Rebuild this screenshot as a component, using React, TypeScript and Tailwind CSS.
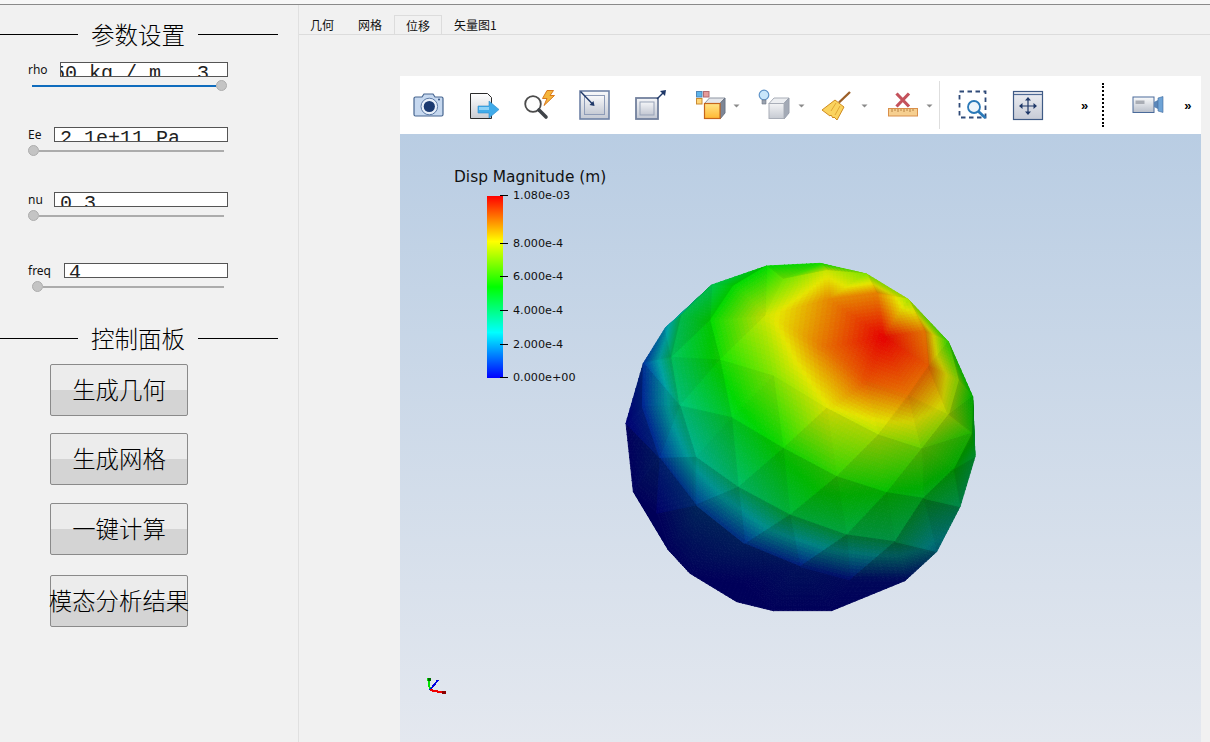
// ParaView style solver window: parameter panel on the left, viewer on the right

type P = { x: number; y: number; s: number };

// mesh vertices read off the picture, s = position on the colour bar
const verts: P[] = [
  // rim
  { x: 470, y: 48, s: 0.5 }, { x: 630, y: 40, s: 0.52 }, { x: 770, y: 72, s: 0.64 }, { x: 895, y: 148, s: 0.68 },
  { x: 1015, y: 275, s: 0.56 }, { x: 1088, y: 440, s: 0.5 }, { x: 1095, y: 620, s: 0.42 }, { x: 1050, y: 770, s: 0.36 },
  { x: 980, y: 905, s: 0.2 }, { x: 885, y: 992, s: 0.02 }, { x: 665, y: 1082, s: 0 }, { x: 490, y: 1082, s: 0 },
  { x: 380, y: 1055, s: 0 }, { x: 240, y: 970, s: 0 }, { x: 175, y: 900, s: 0 }, { x: 70, y: 725, s: 0 },
  { x: 48, y: 520, s: 0 }, { x: 100, y: 340, s: 0.08 }, { x: 165, y: 235, s: 0.2 }, { x: 305, y: 105, s: 0.4 },
  // inside
  { x: 520, y: 88, s: 0.62 }, { x: 650, y: 62, s: 0.72 }, { x: 800, y: 130, s: 0.86 }, { x: 655, y: 148, s: 0.85 },
  { x: 465, y: 198, s: 0.72 }, { x: 370, y: 108, s: 0.5 }, { x: 300, y: 212, s: 0.5 }, { x: 215, y: 195, s: 0.4 },
  { x: 185, y: 322, s: 0.38 }, { x: 330, y: 330, s: 0.52 }, { x: 490, y: 378, s: 0.64 }, { x: 635, y: 290, s: 0.87 },
  { x: 820, y: 262, s: 1 }, { x: 945, y: 245, s: 0.87 }, { x: 955, y: 350, s: 0.9 }, { x: 765, y: 392, s: 0.91 },
  { x: 895, y: 437, s: 0.87 }, { x: 1045, y: 390, s: 0.66 }, { x: 650, y: 475, s: 0.74 }, { x: 805, y: 555, s: 0.69 },
  { x: 1015, y: 495, s: 0.7 }, { x: 1085, y: 550, s: 0.54 }, { x: 935, y: 597, s: 0.62 }, { x: 1030, y: 658, s: 0.5 },
  { x: 520, y: 595, s: 0.52 }, { x: 680, y: 680, s: 0.55 }, { x: 830, y: 728, s: 0.5 }, { x: 940, y: 745, s: 0.46 },
  { x: 365, y: 503, s: 0.46 }, { x: 210, y: 468, s: 0.34 }, { x: 97, y: 470, s: 0.06 }, { x: 150, y: 625, s: 0.07 },
  { x: 258, y: 622, s: 0.3 }, { x: 385, y: 712, s: 0.36 }, { x: 540, y: 795, s: 0.42 }, { x: 710, y: 855, s: 0.4 },
  { x: 855, y: 875, s: 0.38 }, { x: 258, y: 765, s: 0.1 }, { x: 405, y: 882, s: 0.08 }, { x: 570, y: 950, s: 0.05 },
  { x: 140, y: 790, s: 0 }, { x: 400, y: 1000, s: 0 }, { x: 720, y: 990, s: 0.02 },
];

function delaunay(pts: P[]): number[][] {
  const all = [...pts, { x: -5000, y: -5000, s: 0 }, { x: 7000, y: -5000, s: 0 }, { x: 500, y: 8000, s: 0 }];
  const n = pts.length;
  let tris: number[][] = [[n, n + 1, n + 2]];
  const inCircle = (t: number[], p: P) => {
    const [a, b, c] = t.map((i) => all[i]);
    const ax = a.x - p.x, ay = a.y - p.y, bx = b.x - p.x, by = b.y - p.y, cx = c.x - p.x, cy = c.y - p.y;
    const det =
      (ax * ax + ay * ay) * (bx * cy - cx * by) -
      (bx * bx + by * by) * (ax * cy - cx * ay) +
      (cx * cx + cy * cy) * (ax * by - bx * ay);
    const area = (b.x - a.x) * (c.y - a.y) - (c.x - a.x) * (b.y - a.y);
    return area > 0 ? det > 0 : det < 0;
  };
  pts.forEach((p, i) => {
    const bad = tris.filter((t) => inCircle(t, p));
    const edges: number[][] = [];
    bad.forEach((t) => {
      [[t[0], t[1]], [t[1], t[2]], [t[2], t[0]]].forEach(([u, v]) => {
        const shared = bad.some((o) => o !== t && o.includes(u) && o.includes(v));
        if (!shared) edges.push([u, v]);
      });
    });
    tris = tris.filter((t) => !bad.includes(t));
    edges.forEach(([u, v]) => tris.push([u, v, i]));
  });
  return tris.filter((t) => t.every((i) => i < n));
}

function jet(s: number): number[] {
  const stops = [[0, 0, 255], [0, 255, 255], [0, 255, 0], [255, 255, 0], [255, 0, 0]];
  const f = Math.min(Math.max(s, 0), 0.9999) * 4;
  const i = Math.floor(f);
  const t = f - i;
  return stops[i].map((c, k) => c + (stops[i + 1][k] - c) * t);
}

function buildFacets() {
  const out: { pts: string; fill: string }[] = [];
  const div = 12;
  delaunay(verts).forEach((tri) => {
    const [a, b, c] = tri.map((i) => verts[i]);
    const nx = ((a.x + b.x + c.x) / 3 - 570) / 525;
    const ny = ((a.y + b.y + c.y) / 3 - 560) / 525;
    const nz = Math.sqrt(Math.max(0, 1 - nx * nx - ny * ny));
    const dot = 0.18 * nx - 0.6 * ny + 0.78 * nz;
    const shade = Math.min(0.9, Math.max(0.35, 0.32 + 0.65 * dot));
    const at = (i: number, j: number) => {
      const u = i / div, v = j / div, w = 1 - u - v;
      return { x: a.x * w + b.x * u + c.x * v, y: a.y * w + b.y * u + c.y * v, s: a.s * w + b.s * u + c.s * v };
    };
    const push = (p: P, q: P, r: P) => {
      const col = jet((p.s + q.s + r.s) / 3).map((v) => Math.round(v * shade));
      out.push({
        pts: `${p.x.toFixed(1)},${p.y.toFixed(1)} ${q.x.toFixed(1)},${q.y.toFixed(1)} ${r.x.toFixed(1)},${r.y.toFixed(1)}`,
        fill: `rgb(${col.join(",")})`,
      });
    };
    for (let i = 0; i < div; i++) {
      for (let j = 0; j < div - i; j++) {
        push(at(i, j), at(i + 1, j), at(i, j + 1));
        if (i + j < div - 1) push(at(i + 1, j), at(i + 1, j + 1), at(i, j + 1));
      }
    }
  });
  return out;
}

const facets = buildFacets();

function Sphere() {
  return (
    <svg className="absolute left-[210px] top-[116px] w-[380px] h-[370px]" viewBox="0 0 1140 1110">
      {facets.map((f, i) => (
        <polygon key={i} points={f.pts} fill={f.fill} stroke={f.fill} strokeWidth="2.5" />
      ))}
    </svg>
  );
}

function Caret() {
  return (
    <svg className="w-[7px] h-[4px] mt-[2px]" viewBox="0 0 7 4">
      <path d="M0.5 0.5h6L3.5 3.5z" fill="#8a8a8a" />
    </svg>
  );
}

function IconCamera() {
  return (
    <svg className="w-[32px] h-[32px]" viewBox="0 0 32 32">
      <path d="M2.5 8h6.5l2-3h9l2 3h6.500a1.500 1.500 0 0 1 1.500 1.500v16a1.500 1.500 0 0 1-1.500 1.500h-26a1.500 1.500 0 0 1-1.500-1.500v-16a1.500 1.500 0 0 1 1.500-1.500z" fill="#c6d8ef" stroke="#46658f" strokeWidth="1.200" />
      <circle cx="16.300" cy="17.500" r="8.300" fill="#e9f0fa" stroke="#5c7aa5" />
      <circle cx="16.300" cy="17.500" r="5.600" fill="#1b3a70" />
      <circle cx="26" cy="10.500" r="1" fill="#2e4c7e" />
    </svg>
  );
}

function IconExport() {
  return (
    <svg className="w-[32px] h-[32px]" viewBox="0 0 32 32">
      <defs>
        <linearGradient id="pg" x1="0" y1="0" x2="0" y2="1">
          <stop offset="0" stopColor="#ffffff" />
          <stop offset="1" stopColor="#c9ccd2" />
        </linearGradient>
      </defs>
      <path d="M1.500 4.500h17l4 4v21h-21z" fill="url(#pg)" stroke="#2b2b2b" />
      <path d="M9 17h11v-5l10 8.500-10 8.500v-5h-11z" fill="#41abe9" stroke="#2a8ccc" strokeWidth="0.600" />
      <path d="M10 18h10v3h-10z" fill="#8ed2f7" />
    </svg>
  );
}

function IconZoomBolt() {
  return (
    <svg className="w-[32px] h-[32px]" viewBox="0 0 32 32">
      <path d="M24 1.500h6.500l-3.500 5h4.500l-10.500 10 3-7h-4.500z" fill="#f5b63c" stroke="#d9791c" />
      <circle cx="10" cy="15" r="7.800" fill="#fdfdfd" stroke="#4b4b4b" strokeWidth="1.800" />
      <path d="M16 21l7 7" stroke="#3f4348" strokeWidth="3.600" strokeLinecap="round" />
    </svg>
  );
}

function IconReset() {
  return (
    <svg className="w-[32px] h-[32px]" viewBox="0 0 32 32">
      <defs>
        <linearGradient id="fg" x1="0" y1="0" x2="0" y2="1">
          <stop offset="0" stopColor="#f8f9fb" />
          <stop offset="1" stopColor="#c5cad4" />
        </linearGradient>
      </defs>
      <rect x="1" y="2" width="29" height="28" fill="url(#fg)" stroke="#6f82a6" strokeWidth="1.600" />
      <rect x="5.500" y="6.500" width="20" height="19" fill="url(#fg)" stroke="#8e9cb8" />
      <path d="M1.500 2.500L14 15.500" stroke="#1f3868" strokeWidth="1.400" />
      <path d="M15.500 17l-1-5-4 4z" fill="#1f3868" />
    </svg>
  );
}

function IconZoomOut() {
  return (
    <svg className="w-[32px] h-[32px]" viewBox="0 0 32 32">
      <defs>
        <linearGradient id="fo" x1="0" y1="0" x2="0" y2="1">
          <stop offset="0" stopColor="#f4f5f8" />
          <stop offset="1" stopColor="#c2c7d2" />
        </linearGradient>
      </defs>
      <rect x="1" y="9" width="22" height="21" fill="url(#fo)" stroke="#72809d" strokeWidth="1.800" />
      <rect x="5" y="13" width="14" height="13" fill="url(#fo)" stroke="#98a3b8" />
      <path d="M22 10L29 3" stroke="#1f3868" strokeWidth="1.400" />
      <path d="M31 1l-6 1 5 5z" fill="#1f3868" />
    </svg>
  );
}

function IconColorCube() {
  return (
    <svg className="w-[32px] h-[32px]" viewBox="0 0 32 32">
      <defs>
        <linearGradient id="oc" x1="0" y1="0" x2="0" y2="1">
          <stop offset="0" stopColor="#ffe487" />
          <stop offset="1" stopColor="#ffb832" />
        </linearGradient>
      </defs>
      <rect x="2.500" y="2.500" width="5.500" height="5.500" fill="#5db4ea" stroke="#4f86b8" />
      <rect x="9.500" y="2.500" width="5.500" height="5.500" fill="#e59a9a" stroke="#b06a72" />
      <rect x="2.500" y="9.500" width="5.500" height="5.500" fill="#ffd577" stroke="#c98a32" />
      <path d="M10.500 14.500l5-5.500h15.500l-5 5.500z" fill="#e4e6ea" stroke="#8f96a3" />
      <path d="M26 14.500l5-5.500v15l-5 6z" fill="#7d8696" stroke="#6b7484" />
      <rect x="10.500" y="14.500" width="15.500" height="15" fill="url(#oc)" stroke="#c5651c" strokeWidth="1.200" />
    </svg>
  );
}

function IconLightCube() {
  return (
    <svg className="w-[32px] h-[32px]" viewBox="0 0 32 32">
      <defs>
        <linearGradient id="gc" x1="0" y1="0" x2="0" y2="1">
          <stop offset="0" stopColor="#f2f3f5" />
          <stop offset="1" stopColor="#c6cad2" />
        </linearGradient>
      </defs>
      <path d="M11 14.500l5-5.500h15l-5 5.500z" fill="#eceef1" stroke="#a9aeb8" />
      <path d="M26 14.500l5-5.500v15l-5 6z" fill="#a3aab6" stroke="#989fac" />
      <rect x="11" y="14.500" width="15" height="15" fill="url(#gc)" stroke="#a9aeb8" />
      <circle cx="6" cy="6" r="4.800" fill="#c8e6fb" stroke="#5f93c8" strokeWidth="1.200" />
      <path d="M4 11h4v4h-4z" fill="#9aa3b0" stroke="#6f7785" strokeWidth="0.600" />
    </svg>
  );
}

function IconBroom() {
  return (
    <svg className="w-[30px] h-[32px]" viewBox="0 0 30 32">
      <path d="M28 3L17 13.500" stroke="#9c5f28" strokeWidth="2.400" />
      <path d="M13 11l9 7-7 13-3-3-1 1-2-3-1 1-8-6z" fill="#fbd35e" stroke="#cf8b20" />
      <path d="M14 14l-5 8M18 17l-5 9" stroke="#d99b2a" strokeWidth="0.800" />
    </svg>
  );
}

function IconRuler() {
  return (
    <svg className="w-[32px] h-[32px]" viewBox="0 0 32 32">
      <path d="M10.500 4.500L23 17.500M23 4.500L10.500 17.500" stroke="#c4525c" strokeWidth="3.200" />
      <rect x="2.500" y="19.500" width="29" height="7.500" fill="#f6cf90" stroke="#d98f4a" />
      <path d="M6 20v3M9 20v2M12 20v3M15 20v2M18 20v3M21 20v2M24 20v3M27 20v2" stroke="#a8702e" strokeWidth="0.800" />
    </svg>
  );
}

function IconZoomBox() {
  return (
    <svg className="w-[32px] h-[32px]" viewBox="0 0 32 32">
      <rect x="2.500" y="2.500" width="26" height="26" fill="none" stroke="#2f4a78" strokeWidth="1.800" strokeDasharray="4.500 3.500" />
      <circle cx="17" cy="18" r="6" fill="#eef5fb" stroke="#2a79b8" strokeWidth="1.800" />
      <path d="M21.500 22.500l7 6.500" stroke="#2a79b8" strokeWidth="2.800" />
    </svg>
  );
}

function IconWindow() {
  return (
    <svg className="w-[32px] h-[32px]" viewBox="0 0 32 32">
      <defs>
        <linearGradient id="wg" x1="0" y1="0" x2="0" y2="1">
          <stop offset="0" stopColor="#eceef3" />
          <stop offset="1" stopColor="#c7cbd6" />
        </linearGradient>
      </defs>
      <rect x="1.500" y="2.500" width="29" height="28" fill="url(#wg)" stroke="#3f5a85" strokeWidth="1.200" />
      <path d="M2 5.500h28" stroke="#4f6a95" strokeWidth="1.200" />
      <path d="M16 10v14M9 17h14" stroke="#1f3868" strokeWidth="1.200" />
      <path d="M16 8l-3 3.500h6zM16 26l-3-3.500h6zM7 17l3.500-3v6zM25 17l-3.500-3v6z" fill="#1f3868" />
    </svg>
  );
}

function IconVideo() {
  return (
    <svg className="w-[32px] h-[18px]" viewBox="0 0 32 18">
      <defs>
        <linearGradient id="vg" x1="0" y1="0" x2="0" y2="1">
          <stop offset="0" stopColor="#fafbfc" />
          <stop offset="1" stopColor="#b9bfca" />
        </linearGradient>
      </defs>
      <rect x="1" y="1" width="21" height="15.500" fill="url(#vg)" stroke="#4a6a9a" />
      <rect x="3.500" y="4.500" width="9" height="3.500" fill="#a9adb5" />
      <path d="M22 6l4-2v9l-4-2z" fill="#5b86b8" />
      <path d="M26 2l5-1.500v16l-5-1.500z" fill="#6ea3d6" stroke="#3f6a9c" strokeWidth="0.600" />
    </svg>
  );
}

const params = [
  { name: "rho", value: "50 kg / m   3", rowTop: "mt-[16px]", labelW: "w-[32px]", boxW: "w-[168px]", text: "-ml-[8px]", pt: "pt-[4px]", at: 100 },
  { name: "Ee", value: "2.1e+11 Pa", rowTop: "mt-[36px]", labelW: "w-[26px]", boxW: "w-[174px]", text: "ml-[5px]", pt: "pt-[4px]", at: 0 },
  { name: "nu", value: "0.3", rowTop: "mt-[36px]", labelW: "w-[26px]", boxW: "w-[174px]", text: "ml-[5px]", pt: "pt-[4px]", at: 0 },
  { name: "freq", value: "4", rowTop: "mt-[42px]", labelW: "w-[36px]", boxW: "w-[164px]", text: "ml-[4px]", pt: "pt-[2px]", at: 4 },
];

const buttons = [
  { label: "生成几何", top: "mt-[14px]" },
  { label: "生成网格", top: "mt-[17px]" },
  { label: "一键计算", top: "mt-[18px]" },
  { label: "模态分析结果", top: "mt-[20px]" },
];

const ticks = [
  { y: 61, t: "1.080e-03" },
  { y: 109, t: "8.000e-4" },
  { y: 142, t: "6.000e-4" },
  { y: 176, t: "4.000e-4" },
  { y: 210, t: "2.000e-4" },
  { y: 243, t: "0.000e+00" },
];

function SectionTitle({ text, top }: { text: string; top: string }) {
  return (
    <div className={`flex items-center h-[24px] w-[278px] ${top}`}>
      <div className="w-[78px] h-px bg-black" />
      <div className="w-[120px] text-center text-[23.500px] leading-[24px] font-light text-black">{text}</div>
      <div className="w-[80px] h-px bg-black" />
    </div>
  );
}

function ParamRow({ p }: { p: (typeof params)[number] }) {
  return (
    <>
      <div className={`flex items-center pl-[28px] ${p.rowTop}`}>
        <div className={`${p.labelW} text-[12px] leading-[15px] text-[#111] font-['Noto_Sans',sans-serif]`}>{p.name}</div>
        <div className={`${p.boxW} h-[15px] box-border border border-[#555] bg-white overflow-hidden ${p.pt}`}>
          <div className={`${p.text} whitespace-pre text-[20px] leading-[13px] text-[#222] font-['Liberation_Mono',monospace]`}>{p.value}</div>
        </div>
      </div>
      {p.at === 100 ? (
        <div className="flex items-center mt-[3px] h-[11px] pl-[32px]">
          <div className="w-[184px] h-[2px] bg-[#0f6cbd]" />
          <div className="w-[11px] h-[11px] rounded-full bg-[#c4c4c4] border border-[#adadad]" />
        </div>
      ) : (
        <div className={`flex items-center mt-[3px] h-[11px] ${p.at === 4 ? "pl-[32px]" : "pl-[28px]"}`}>
          <div className="w-[11px] h-[11px] rounded-full bg-[#c4c4c4] border border-[#adadad] shrink-0" />
          <div className={`${p.at === 4 ? "w-[181px]" : "w-[185px]"} h-[2px] bg-[#acacac]`} />
        </div>
      )}
    </>
  );
}

export default function App() {
  return (
    <div className="w-[1210px] h-[742px] overflow-hidden flex flex-col bg-[#f1f1f1] font-['Noto_Sans_CJK_SC',sans-serif]">
      <div className="h-[4px] bg-[#f7f7f7]" />
      <div className="h-px bg-[#8a8a8a]" />

      <div className="flex-1 flex min-h-0">
        {/* left panel */}
        <div className="w-[299px] shrink-0 flex flex-col pt-[17px]">
          <SectionTitle text="参数设置" top="" />
          {params.map((p) => (
            <ParamRow key={p.name} p={p} />
          ))}
          <SectionTitle text="控制面板" top="mt-[34px]" />
          {buttons.map((b) => (
            <div
              key={b.label}
              className={`ml-[50px] w-[138px] h-[52px] box-border border border-[#8a8a8a] rounded-[2px] flex items-center justify-center whitespace-nowrap text-[23.400px] font-light text-black bg-[linear-gradient(#ececec_0,#ececec_50%,#d4d4d4_50%,#d4d4d4_100%)] ${b.top}`}
            >
              {b.label}
            </div>
          ))}
        </div>

        {/* right side */}
        <div className="flex-1 flex flex-col min-w-0 border-l border-[#e0e0e0] -ml-px">
          <div className="h-[30px] pt-[10px] shrink-0 flex border-b border-[#dcdcdc] text-[12px] leading-[20px] text-[#111]">
            <div className="pl-[11px] pr-[12px]">几何</div>
            <div className="px-[12px]">网格</div>
            <div className="px-[11px] border border-b-0 border-[#dcdcdc] bg-[#f1f1f1]">位移</div>
            <div className="px-[12px]">矢量图1</div>
          </div>

          <div className="flex-1 flex flex-col ml-[101px] mt-[41px] w-[801px] min-h-0">
            {/* toolbar */}
            <div className="h-[58px] shrink-0 bg-white flex items-center">
              <div className="ml-[13px]"><IconCamera /></div>
              <div className="ml-[24px]"><IconExport /></div>
              <div className="ml-[22px]"><IconZoomBolt /></div>
              <div className="ml-[24px]"><IconReset /></div>
              <div className="ml-[24px]"><IconZoomOut /></div>
              <div className="ml-[27px]"><IconColorCube /></div>
              <div className="ml-[7px]"><Caret /></div>
              <div className="ml-[18px]"><IconLightCube /></div>
              <div className="ml-[8px]"><Caret /></div>
              <div className="ml-[17px]"><IconBroom /></div>
              <div className="ml-[9px]"><Caret /></div>
              <div className="ml-[18px]"><IconRuler /></div>
              <div className="ml-[8px]"><Caret /></div>
              <div className="ml-[6px] w-px h-[48px] bg-[#dedede]" />
              <div className="ml-[17px]"><IconZoomBox /></div>
              <div className="ml-[23px]"><IconWindow /></div>
              <div className="ml-[37px] text-[13px] leading-none font-bold text-black font-['Liberation_Sans',sans-serif]">»</div>
              <div className="ml-[14px] h-[44px] border-l-2 border-dotted border-black" />
              <div className="ml-[28px]"><IconVideo /></div>
              <div className="ml-[20px] text-[13px] leading-none font-bold text-black font-['Liberation_Sans',sans-serif]">»</div>
            </div>

            {/* render view */}
            <div className="flex-1 relative bg-[linear-gradient(#b9cde3,#e4e8ef)] overflow-hidden">
              <Sphere />

              <div className="absolute left-[54px] top-[33px] text-[15.400px] leading-[20px] text-[#111] whitespace-nowrap font-['DejaVu_Sans',sans-serif]">
                Disp Magnitude (m)
              </div>
              <div className="absolute left-[87px] top-[62px] w-[16px] h-[182px] bg-[linear-gradient(#ff0000,#ffff00_25%,#00ff00_50%,#00ffff_75%,#0000ff)]" />
              {ticks.map((m) => (
                <div key={m.t} className="absolute left-[100px] flex items-center h-[1px]" style={{ top: m.y }}>
                  <div className="w-[8px] h-px bg-black" />
                  <div className="ml-[5px] text-[11.200px] leading-none text-[#111] whitespace-nowrap font-['DejaVu_Sans',sans-serif]">{m.t}</div>
                </div>
              ))}

              <svg className="absolute left-[24px] top-[540px] w-[24px] h-[24px]" viewBox="0 0 24 24" shapeRendering="crispEdges">
                <path d="M6 16L4 4" stroke="#00e000" strokeWidth="2" />
                <path d="M4 4h3v3h-3z" fill="#006a00" />
                <path d="M6 16L14 6" stroke="#0000e0" strokeWidth="2" />
                <path d="M6 16L21 19" stroke="#f00000" strokeWidth="2" />
                <path d="M18 17h4v3h-4z" fill="#8a0000" />
              </svg>
            </div>
          </div>
        </div>
      </div>
    </div>
  );
}
